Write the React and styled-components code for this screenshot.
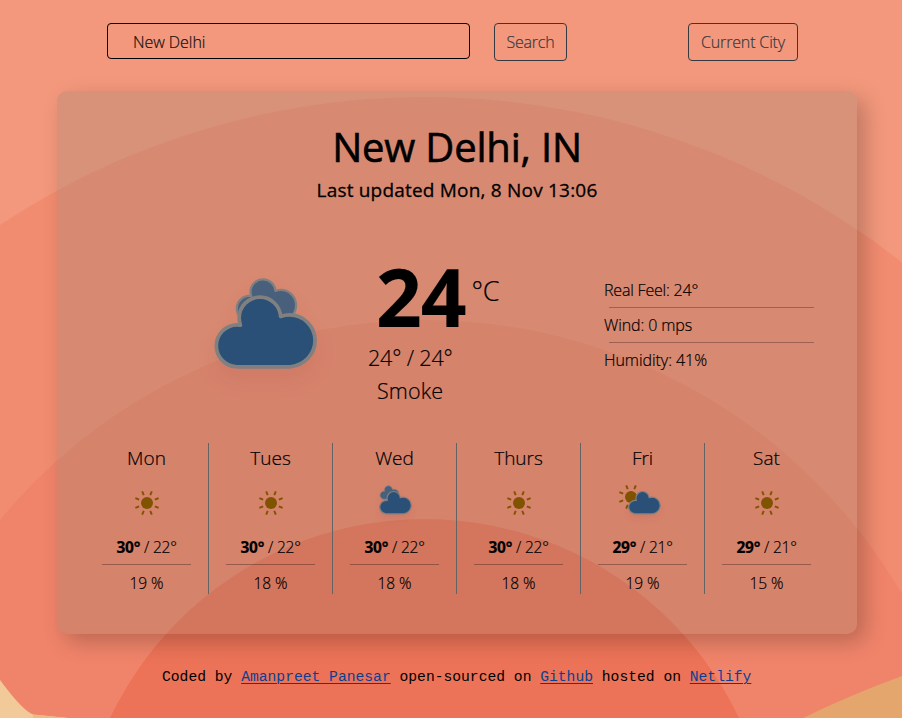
import React from "react";
import styled, { createGlobalStyle } from "styled-components";

const GlobalStyle = createGlobalStyle`
  *, *::before, *::after { box-sizing: border-box; }
  html, body { margin: 0; padding: 0; }
  body {
    background: #f3987c;
    color: #000;
    font-family: "Open Sans", "Noto Sans", sans-serif;
    font-size: 16px;
    font-weight: 300;
    overflow: hidden;
  }
`;

const Page = styled.div`
  position: relative;
  isolation: isolate;
  width: 902px;
  height: 718px;
  overflow: hidden;
  display: flex;
  flex-direction: column;
`;

const Backdrop = styled.svg`
  position: absolute;
  inset: 0;
  z-index: -1;
  width: 902px;
  height: 718px;
`;

const SearchBar = styled.form`
  display: flex;
  align-items: flex-start;
  height: 91px;
  padding: 23px 104px 0 107px;
`;

const CityInput = styled.input`
  width: 363px;
  height: 36px;
  margin-right: 24px;
  padding: 1px 25px 0;
  border: 1px solid #000;
  border-radius: 4px;
  background: transparent;
  color: #101010;
  font: 300 16px/33px "Open Sans", sans-serif;
  letter-spacing: -0.05px;
  -webkit-text-stroke: 0.2px #101010;
  outline: none;
`;

const OutlineButton = styled.button`
  width: ${(p) => p.$width}px;
  height: 38px;
  padding: 0;
  margin-left: ${(p) => (p.$end ? "auto" : "0")};
  border: 1px solid #343a40;
  border-radius: 4px;
  background: transparent;
  color: #343a40;
  font: 300 16px/36px "Open Sans", sans-serif;
  letter-spacing: ${(p) => p.$track || 0}px;
  -webkit-text-stroke: 0.2px #343a40;
  white-space: nowrap;
`;

const Card = styled.main`
  width: 800px;
  height: 543px;
  margin-left: 57px;
  padding: 32px 28px 0;
  border-radius: 10px;
  background: rgba(128, 128, 116, 0.23);
  box-shadow: 8px 8px 22px rgba(0, 0, 0, 0.22);
`;

const City = styled.h1`
  margin: 0;
  font-size: 40px;
  font-weight: 400;
  -webkit-text-stroke: 0.6px #000;
  line-height: 48px;
  letter-spacing: ${(p) => p.$track}px;
  text-align: center;
`;

const Updated = styled.h2`
  margin: 7px 0 0;
  font-size: 19px;
  font-weight: 400;
  -webkit-text-stroke: 0.3px #000;
  line-height: 24px;
  letter-spacing: ${(p) => p.$track}px;
  text-align: center;
`;

const Current = styled.section`
  display: grid;
  grid-template-columns: 201px 190px 210px;
  column-gap: 0;
  height: 241px;
  padding-left: 81px;
`;

const CurrentIcon = styled.div`
  width: 200px;
  height: 200px;
  padding-top: 31px;
`;

const Reading = styled.div`
  padding-top: 54px;
  -webkit-text-stroke: 0.2px #000;
`;

const TempLine = styled.div`
  display: flex;
  align-items: flex-start;
  height: 85px;
  padding-left: 9px;
`;

const Degrees = styled.span`
  font-size: 80px;
  font-weight: 700;
  line-height: 79px;
  letter-spacing: -1px;
`;

const Unit = styled.span`
  margin: 18px 0 0 6px;
  font-size: 27px;
  line-height: 34px;
  letter-spacing: -0.3px;
`;

const Detail = styled.div`
  margin-left: ${(p) => p.$indent}px;
  font-size: 21.5px;
  line-height: 33px;
  letter-spacing: ${(p) => p.$track}px;
  white-space: nowrap;
`;

const Stats = styled.div`
  padding-top: 78px;
  margin-left: 47px;
`;

const Stat = styled.div`
  width: 210px;
  height: 35px;
  font-size: 16px;
  line-height: 21px;
  letter-spacing: ${(p) => p.$track}px;
  -webkit-text-stroke: 0.2px #000;
  white-space: nowrap;

  &:not(:last-child)::after {
    content: "";
    display: block;
    width: 205px;
    height: 1px;
    margin: 6px 0 0 5px;
    background: rgba(60, 30, 30, 0.38);
  }
`;

const Forecast = styled.section`
  display: grid;
  grid-template-columns: repeat(6, 124px);
  grid-template-rows: 151px;
  -webkit-text-stroke: 0.2px #000;
`;

const Day = styled.article`
  display: flex;
  flex-direction: column;
  align-items: center;
  padding: 0 17px;
  border-right: 1px solid #666364;

  &:last-child { border-right-color: transparent; }
`;

const DayName = styled.div`
  flex: none;
  height: 28px;
  font-size: 19px;
  line-height: 30px;
`;

const DayTemps = styled.div`
  flex: none;
  width: 89px;
  height: 30px;
  border-bottom: 1px solid rgba(60, 30, 30, 0.4);
  font-size: 15.5px;
  line-height: 25px;
  letter-spacing: -0.2px;
  text-align: center;
  white-space: nowrap;
`;

const High = styled.b`
  font-weight: 700;
`;

const Rain = styled.div`
  flex: none;
  height: 29px;
  font-size: 15.5px;
  line-height: 36px;
  letter-spacing: -0.1px;
`;

const Footer = styled.footer`
  margin: 33px 0 0 162px;
  font: 400 14.667px/20px "Liberation Mono", monospace;
  white-space: nowrap;
`;

const Link = styled.a`
  color: #0a3f91;
  text-decoration: underline;
  text-decoration-thickness: 1px;
  text-underline-offset: 2px;
`;

const IconSvg = styled.svg`
  display: block;
  flex: none;
  overflow: visible;
`;

const CloudShape = styled.path`
  fill: ${(p) => (p.$back ? "#48607c" : "#2b5077")};
  stroke: #808080;
  stroke-width: 1.2;
  stroke-linejoin: round;
`;

const SoftShadow = styled.g`
  filter: drop-shadow(0 4px 3px rgba(140, 20, 20, 0.08));
`;

const cloud =
  "M47.7,35.4c0-4.6-3.7-8.2-8.2-8.2c-1,0-1.9,0.2-2.8,0.5c-0.3-3.4-3.1-6.2-6.6-6.2c-3.7,0-6.7,3-6.7,6.7c0,0.8,0.2,1.6,0.4,2.3c-0.3-0.1-0.7-0.1-1-0.1c-3.7,0-6.7,3-6.7,6.7c0,3.6,2.9,6.6,6.5,6.7l17.2,0C44.2,43.3,47.7,39.8,47.7,35.4z";

function Sun({ x, y }) {
  return (
    <g transform={`translate(${x} ${y})`}>
      {Array.from({ length: 8 }, (_, i) => (
        <line
          key={i}
          y1="8.5"
          y2="12.6"
          stroke="#805300"
          strokeWidth="1.9"
          transform={`rotate(${22.5 + i * 45})`}
        />
      ))}
      <circle r="6" fill="#805300" />
    </g>
  );
}

function WeatherIcon({ kind, size = 64, drift = -2.6 }) {
  const shift = size > 64 ? 0 : kind === "partly" ? 1.5 : 0.6;
  return (
    <IconSvg width={size} height={size} viewBox="0 0 64 64">
      {kind === "sun" && <Sun x={32} y={32} />}
      {kind === "partly" && <Sun x={20} y={26} />}
      {kind !== "sun" && (
        <SoftShadow>
          {kind === "cloudy" && (
            <CloudShape
              $back
              d={cloud}
              transform={`translate(${10 + drift} 1.9) scale(0.6)`}
            />
          )}
          <CloudShape d={cloud} transform={`translate(${shift} -1)`} />
        </SoftShadow>
      )}
    </IconSvg>
  );
}

const days = [
  { name: "Mon", icon: "sun", high: 30, low: 22, rain: 19 },
  { name: "Tues", icon: "sun", high: 30, low: 22, rain: 18 },
  { name: "Wed", icon: "cloudy", high: 30, low: 22, rain: 18 },
  { name: "Thurs", icon: "sun", high: 30, low: 22, rain: 18 },
  { name: "Fri", icon: "partly", high: 29, low: 21, rain: 19 },
  { name: "Sat", icon: "sun", high: 29, low: 21, rain: 15 },
];

export default function App() {
  return (
    <>
      <GlobalStyle />
      <Page>
        <Backdrop viewBox="0 0 902 718" aria-hidden="true">
          <rect width="902" height="718" fill="#f3987c" />
          <circle cx="425" cy="867" r="770" fill="#f28c70" />
          <circle cx="425" cy="872" r="552" fill="#f0846a" />
          <circle cx="424.5" cy="867" r="348" fill="#ec7357" />
          <path d="M0 680Q22 710 33 714.5L68 718H0Z" fill="#f2c998" />
          <path d="M33 714.5L68 718H33Z" fill="#efb983" />
          <path d="M803 718Q850 695 902 676V718Z" fill="#e4a66c" />
        </Backdrop>

        <SearchBar onSubmit={(e) => e.preventDefault()}>
          <CityInput defaultValue="New Delhi" aria-label="City" />
          <OutlineButton $width={73} $track={-0.2}>Search</OutlineButton>
          <OutlineButton type="button" $width={110} $track={-0.15} $end>Current City</OutlineButton>
        </SearchBar>

        <Card>
          <City $track={-0.2}>New Delhi, IN</City>
          <Updated $track={0.2}>Last updated Mon, 8 Nov 13:06</Updated>

          <Current>
            <CurrentIcon>
              <WeatherIcon kind="cloudy" size={200} drift={3} />
            </CurrentIcon>
            <Reading>
              <TempLine>
                <Degrees>24</Degrees>
                <Unit>°C</Unit>
              </TempLine>
              <Detail $indent={1} $track={-0.15}>24° / 24°</Detail>
              <Detail $indent={10} $track={0.1}>Smoke</Detail>
            </Reading>
            <Stats>
              <Stat $track={-0.2}>Real Feel: 24°</Stat>
              <Stat $track={-0.1}>Wind: 0 mps</Stat>
              <Stat $track={-0.05}>Humidity: 41%</Stat>
            </Stats>
          </Current>

          <Forecast>
            {days.map((day) => (
              <Day key={day.name}>
                <DayName>{day.name}</DayName>
                <WeatherIcon kind={day.icon} />
                <DayTemps>
                  <High>{day.high}°</High> / {day.low}°
                </DayTemps>
                <Rain>{day.rain} %</Rain>
              </Day>
            ))}
          </Forecast>
        </Card>

        <Footer>
          Coded by <Link href="#author">Amanpreet Panesar</Link> open-sourced on{" "}
          <Link href="#source">Github</Link> hosted on <Link href="#host">Netlify</Link>
        </Footer>
      </Page>
    </>
  );
}
